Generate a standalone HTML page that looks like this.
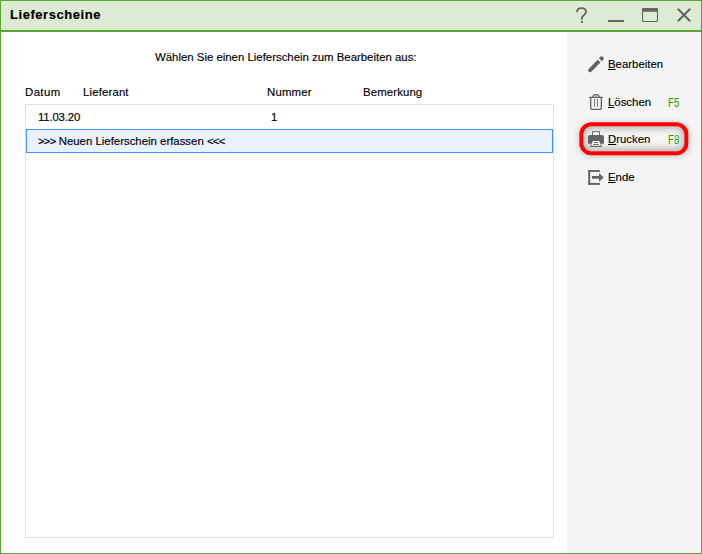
<!DOCTYPE html>
<html><head><meta charset="utf-8">
<style>
*{margin:0;padding:0;box-sizing:border-box}
html,body{width:702px;height:554px;overflow:hidden;background:#fff}
body{font-family:"Liberation Sans",sans-serif;color:#000;position:relative}
.abs{position:absolute}
#frame{left:0;top:0;width:702px;height:554px;border:1px solid #58a632}
#title{left:1px;top:1px;width:700px;height:29px;background:#deebd4}
#tline{left:1px;top:30px;width:700px;height:2px;background:#58a632}
#panel{left:567px;top:32px;width:134px;height:521px;background:#f4f4f4}
.t{position:absolute;white-space:pre;font-size:11.4px;line-height:14px;-webkit-text-stroke:0.15px currentColor}
#list{left:25px;top:104px;width:529px;height:434px;border:1px solid #e2e2e2}
#sel{left:26px;top:129px;width:527px;height:24px;border:1px solid #3d95fd;background:#e9f2ff}
.fk{color:#14a014;-webkit-text-stroke:0;font-size:13px!important;transform:scaleX(0.74);transform-origin:0 0}
</style></head><body>
<div class="abs" id="frame"></div>
<div class="abs" id="title"></div>
<div class="abs" id="tline"></div>
<div class="t" style="left:10px;top:7px;font-size:13px;font-weight:bold;line-height:16px;letter-spacing:0.55px;color:#000">Lieferscheine</div>

<!-- title buttons -->
<svg class="abs" style="left:570px;top:2px" width="130" height="28" viewBox="570 2 130 28">
  <path d="M577,12.3 C577,9.6 579,8.1 581.6,8.1 C584.3,8.1 586,9.8 586,11.8 C586,13.8 584.5,14.7 583.2,15.8 C582.2,16.6 581.9,17.3 581.9,18.5 L581.9,19.8" fill="none" stroke="#646464" stroke-width="1.8"/>
  <rect x="580.9" y="21.1" width="2.1" height="1.8" fill="#646464"/>
  <rect x="608" y="20" width="16" height="2" fill="#646464"/>
  <rect x="642.5" y="8.5" width="15" height="13" rx="1" fill="none" stroke="#646464" stroke-width="1.1"/>
  <rect x="642" y="8" width="16" height="3.7" rx="1" fill="#646464"/>
  <path d="M677.8 8.8 L690.2 21.2 M690.2 8.8 L677.8 21.2" stroke="#646464" stroke-width="2"/>
</svg>

<div class="abs" id="panel"></div>

<div class="t" style="left:155px;top:50px">Wählen Sie einen Lieferschein zum Bearbeiten aus:</div>
<div class="t" style="left:25px;top:85px;letter-spacing:0.4px">Datum</div>
<div class="t" style="left:83px;top:85px;letter-spacing:0.15px">Lieferant</div>
<div class="t" style="left:267px;top:85px;letter-spacing:0.18px">Nummer</div>
<div class="t" style="left:363px;top:85px;letter-spacing:0.12px">Bemerkung</div>

<div class="abs" id="list"></div>
<div class="t" style="left:38px;top:110px;letter-spacing:-0.18px">11.03.20</div>
<div class="t" style="left:271px;top:110px">1</div>
<div class="abs" id="sel"></div>
<div class="t" style="left:38px;top:134px"><span style="letter-spacing:-0.8px">&gt;&gt;&gt;</span> Neuen Lieferschein erfassen <span style="letter-spacing:-0.8px">&lt;&lt;</span>&lt;</div>

<!-- right panel buttons -->
<div class="abs" style="left:579px;top:122px;width:110px;height:33px;border-radius:12px;box-shadow:0 1px 5px 1px rgba(0,0,0,0.17)"></div>
<div class="abs" style="left:583px;top:126px;width:102px;height:25px;border-radius:8px;background:#f7f7f7;box-shadow:inset 0 0 7px 3px rgba(0,0,0,0.26)"></div>
<svg class="abs" style="left:570px;top:115px" width="130" height="50" viewBox="570 115 130 50"><rect x="581.3" y="124.3" width="105.1" height="29" rx="10" fill="none" stroke="#ff0000" stroke-width="4"/></svg>

<svg class="abs" style="left:570px;top:40px" width="130" height="160" viewBox="570 40 130 160">
  <g fill="#646464">
    <path d="M597.73,59.83 L600.47,62.57 L591.27,71.77 A1.95,1.95 0 0 1 588.53,69.03 Z"/>
    <path d="M598.92,58.22 L601.88,61.18 L603.28,59.78 A2.1,2.1 0 0 0 600.32,56.82 Z"/>
  </g>
  <g fill="none" stroke="#646464">
    <path d="M589.6,97.35 H602.4" stroke-width="1.3" stroke-linecap="round"/>
    <path d="M590.7,98 V108 Q590.7,109.35 592,109.35 H600 Q601.35,109.35 601.35,108 V98" stroke-width="1.3"/>
    <path d="M592.4,97 L593.6,94.7 H598.4 L599.6,97" stroke-width="1" fill="#b4b4b4"/>
  </g>
  <g fill="#646464">
    <rect x="594" y="99" width="0.9" height="7.8"/>
    <rect x="596.9" y="99" width="0.9" height="7.8"/>
  </g>
  <g>
    <rect x="592.5" y="131.7" width="6.9" height="4.8" fill="#fff" stroke="#646464" stroke-width="1"/>
    <path d="M588,137 Q588,135 590,135 L602,135 Q604,135 604,137 L604,143.8 L588,143.8 Z" fill="#646464"/>
    <path d="M592,140 L600,140 L602,146.9 L590,146.9 Z" fill="#646464"/>
    <path d="M592.9,141 L599.1,141 L600.9,145.8 L591.1,145.8 Z" fill="#fff"/>
    <rect x="594" y="142" width="3.8" height="1" fill="#646464"/>
    <rect x="593" y="144.1" width="6" height="0.9" fill="#646464"/>
  </g>
  <g fill="#646464">
    <rect x="588.2" y="170.1" width="11.7" height="1.8"/>
    <rect x="588.2" y="170.1" width="2" height="14.8"/>
    <rect x="588.2" y="182.9" width="11.7" height="2"/>
    <rect x="592" y="176" width="7.5" height="2.7"/>
    <path d="M599,173 L603.7,177.4 L599,181.8 Z"/>
  </g>
</svg>

<div class="t" style="left:608px;top:57px"><u>B</u>earbeiten</div>
<div class="t" style="left:608px;top:95px"><u>L</u>öschen</div>
<div class="t fk" style="left:667.8px;top:96px">F5</div>
<div class="t" style="left:608px;top:132px"><u>D</u>rucken</div>
<div class="t fk" style="left:667.8px;top:133px">F8</div>
<div class="t" style="left:608px;top:170px"><u>E</u>nde</div>

</body></html>
